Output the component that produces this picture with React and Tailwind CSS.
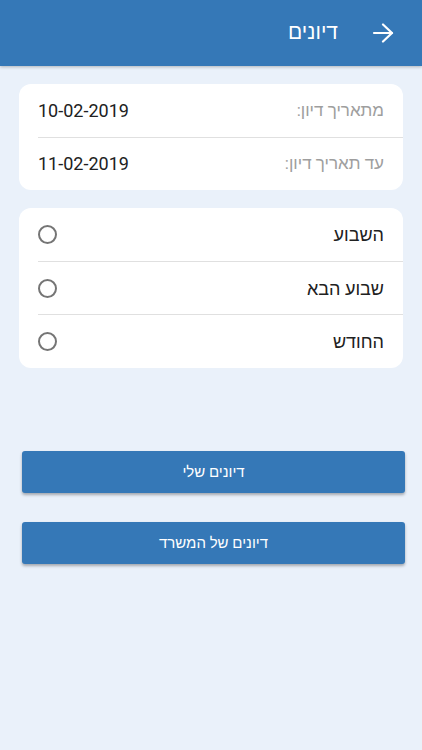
import React from "react";

const font = { fontFamily: "Roboto, 'Noto Sans', 'Liberation Sans', sans-serif" };

function Radio() {
  return <span className="block w-[19px] h-[19px] rounded-full border-2 border-[#757575]" />;
}

export default function App() {
  return (
    <div dir="rtl" style={font} className="w-[422px] h-[750px] bg-[#eaf1fa] flex flex-col overflow-hidden">
      <div className="h-[66px] bg-[#3578b7] flex items-center pr-[28px] shadow-[0_1px_3px_rgba(0,0,0,0.25)] shrink-0">
        <svg width="22" height="20" viewBox="0 0 22 20" fill="none" stroke="white" strokeWidth="2.2" strokeLinecap="round" strokeLinejoin="round">
          <path d="M2 10H20" />
          <path d="M11 1.5L20 10L11 18.5" />
        </svg>
        <span className="text-white text-[21px] font-medium mr-[34px]">דיונים</span>
      </div>

      <div className="mx-[19px] mt-[18px] bg-white rounded-[12px] flex flex-col">
        <div className="h-[52.5px] flex items-center justify-between pr-[19px] pl-[19px]">
          <span className="text-[17px] text-[#9e9e9e]">מתאריך דיון:</span>
          <span className="text-[18px] text-[#212121]">10-02-2019</span>
        </div>
        <div className="h-px bg-[#e0e0e0] ml-[19px]" />
        <div className="h-[52.5px] flex items-center justify-between pr-[19px] pl-[19px]">
          <span className="text-[17px] text-[#9e9e9e]">עד תאריך דיון:</span>
          <span className="text-[18px] text-[#212121]">11-02-2019</span>
        </div>
      </div>

      <div className="mx-[19px] mt-[18px] bg-white rounded-[12px] flex flex-col">
        {["השבוע", "שבוע הבא", "החודש"].map((t, i) => (
          <React.Fragment key={t}>
            {i > 0 && <div className="h-px bg-[#e0e0e0] ml-[19px]" />}
            <div className="h-[52.7px] flex items-center justify-between pr-[19px] pl-[19px]">
              <span className="text-[18px] text-[#212121]">{t}</span>
              <Radio />
            </div>
          </React.Fragment>
        ))}
      </div>

      <div className="mr-[17px] ml-[22px] mt-[83px] flex flex-col gap-[29px]">
        <button className="h-[42px] rounded-[3px] bg-[#3578b7] text-white text-[15px] font-medium shadow-[0_2px_3px_rgba(0,0,0,0.3)]">דיונים שלי</button>
        <button className="h-[42px] rounded-[3px] bg-[#3578b7] text-white text-[15px] font-medium shadow-[0_2px_3px_rgba(0,0,0,0.3)]">דיונים של המשרד</button>
      </div>
    </div>
  );
}
